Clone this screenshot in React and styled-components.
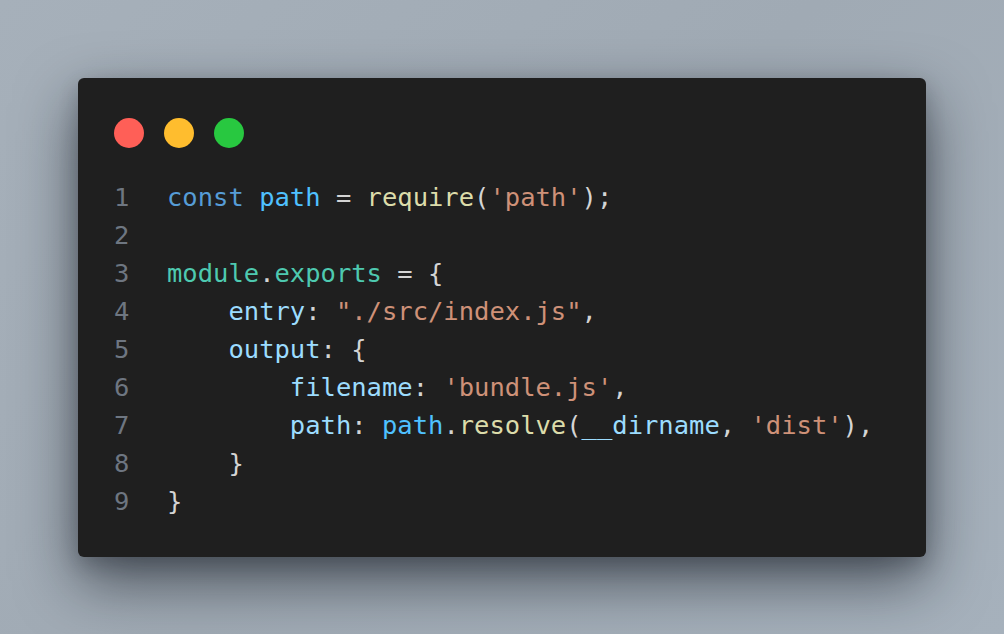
import React from "react";
import styled, { createGlobalStyle } from "styled-components";

const Global = createGlobalStyle`
  html, body { margin: 0; padding: 0; }
  body {
    width: 1004px;
    height: 634px;
    overflow: hidden;
    background: linear-gradient(135deg, #a6b0ba 0%, #a0aab4 50%, #a6b1bc 100%);
  }
`;

const Stage = styled.div`
  width: 1004px;
  height: 634px;
  display: flex;
  align-items: center;
  justify-content: center;
`;

const Card = styled.div`
  width: 848px;
  box-sizing: border-box;
  background: #1f1f1f;
  border-radius: 6px;
  padding: 40px 36px 37px 36px;
  box-shadow: 0 24px 60px rgba(15, 20, 28, 0.6), 0 8px 20px rgba(15, 20, 28, 0.2);
  display: flex;
  flex-direction: column;
  gap: 30px;
`;

const Dots = styled.div`
  display: flex;
  gap: 20px;
`;

const Dot = styled.span`
  width: 30px;
  height: 30px;
  border-radius: 50%;
  background: ${(p) => p.$c};
`;

const Code = styled.div`
  font-family: "DejaVu Sans Mono", "Liberation Mono", monospace;
  font-size: 25.5px;
  line-height: 38px;
  color: #d4d4d4;
  white-space: pre;
`;

const Line = styled.div`
  display: flex;
  height: 38px;
`;

const Num = styled.span`
  width: 53px;
  flex: none;
  color: #6e7681;
`;

const T = styled.span`
  color: ${(p) => p.$c || "#d4d4d4"};
`;

const C = {
  kw: "#569cd6",
  cvar: "#4fc1ff",
  fn: "#dcdcaa",
  str: "#ce9178",
  cls: "#4ec9b0",
  prop: "#9cdcfe",
  p: "#d4d4d4",
};

const lines = [
  [["const", C.kw], [" "], ["path", C.cvar], [" = "], ["require", C.fn], ["("], ["'path'", C.str], [");"]],
  [],
  [["module", C.cls], ["."], ["exports", C.cls], [" = {"]],
  [["    "], ["entry", C.prop], [": "], ['"./src/index.js"', C.str], [","]],
  [["    "], ["output", C.prop], [": {"]],
  [["        "], ["filename", C.prop], [": "], ["'bundle.js'", C.str], [","]],
  [["        "], ["path", C.prop], [": "], ["path", C.cvar], ["."], ["resolve", C.fn], ["("], ["__dirname", C.prop], [", "], ["'dist'", C.str], ["),"]],
  [["    }"]],
  [["}"]],
];

export default function App() {
  return (
    <>
      <Global />
      <Stage>
        <Card>
          <Dots>
            <Dot $c="#ff5f57" />
            <Dot $c="#ffbd2e" />
            <Dot $c="#28c840" />
          </Dots>
          <Code>
            {lines.map((toks, i) => (
              <Line key={i}>
                <Num>{i + 1}</Num>
                <span>
                  {toks.map(([t, c], j) => (
                    <T key={j} $c={c}>{t}</T>
                  ))}
                </span>
              </Line>
            ))}
          </Code>
        </Card>
      </Stage>
    </>
  );
}
